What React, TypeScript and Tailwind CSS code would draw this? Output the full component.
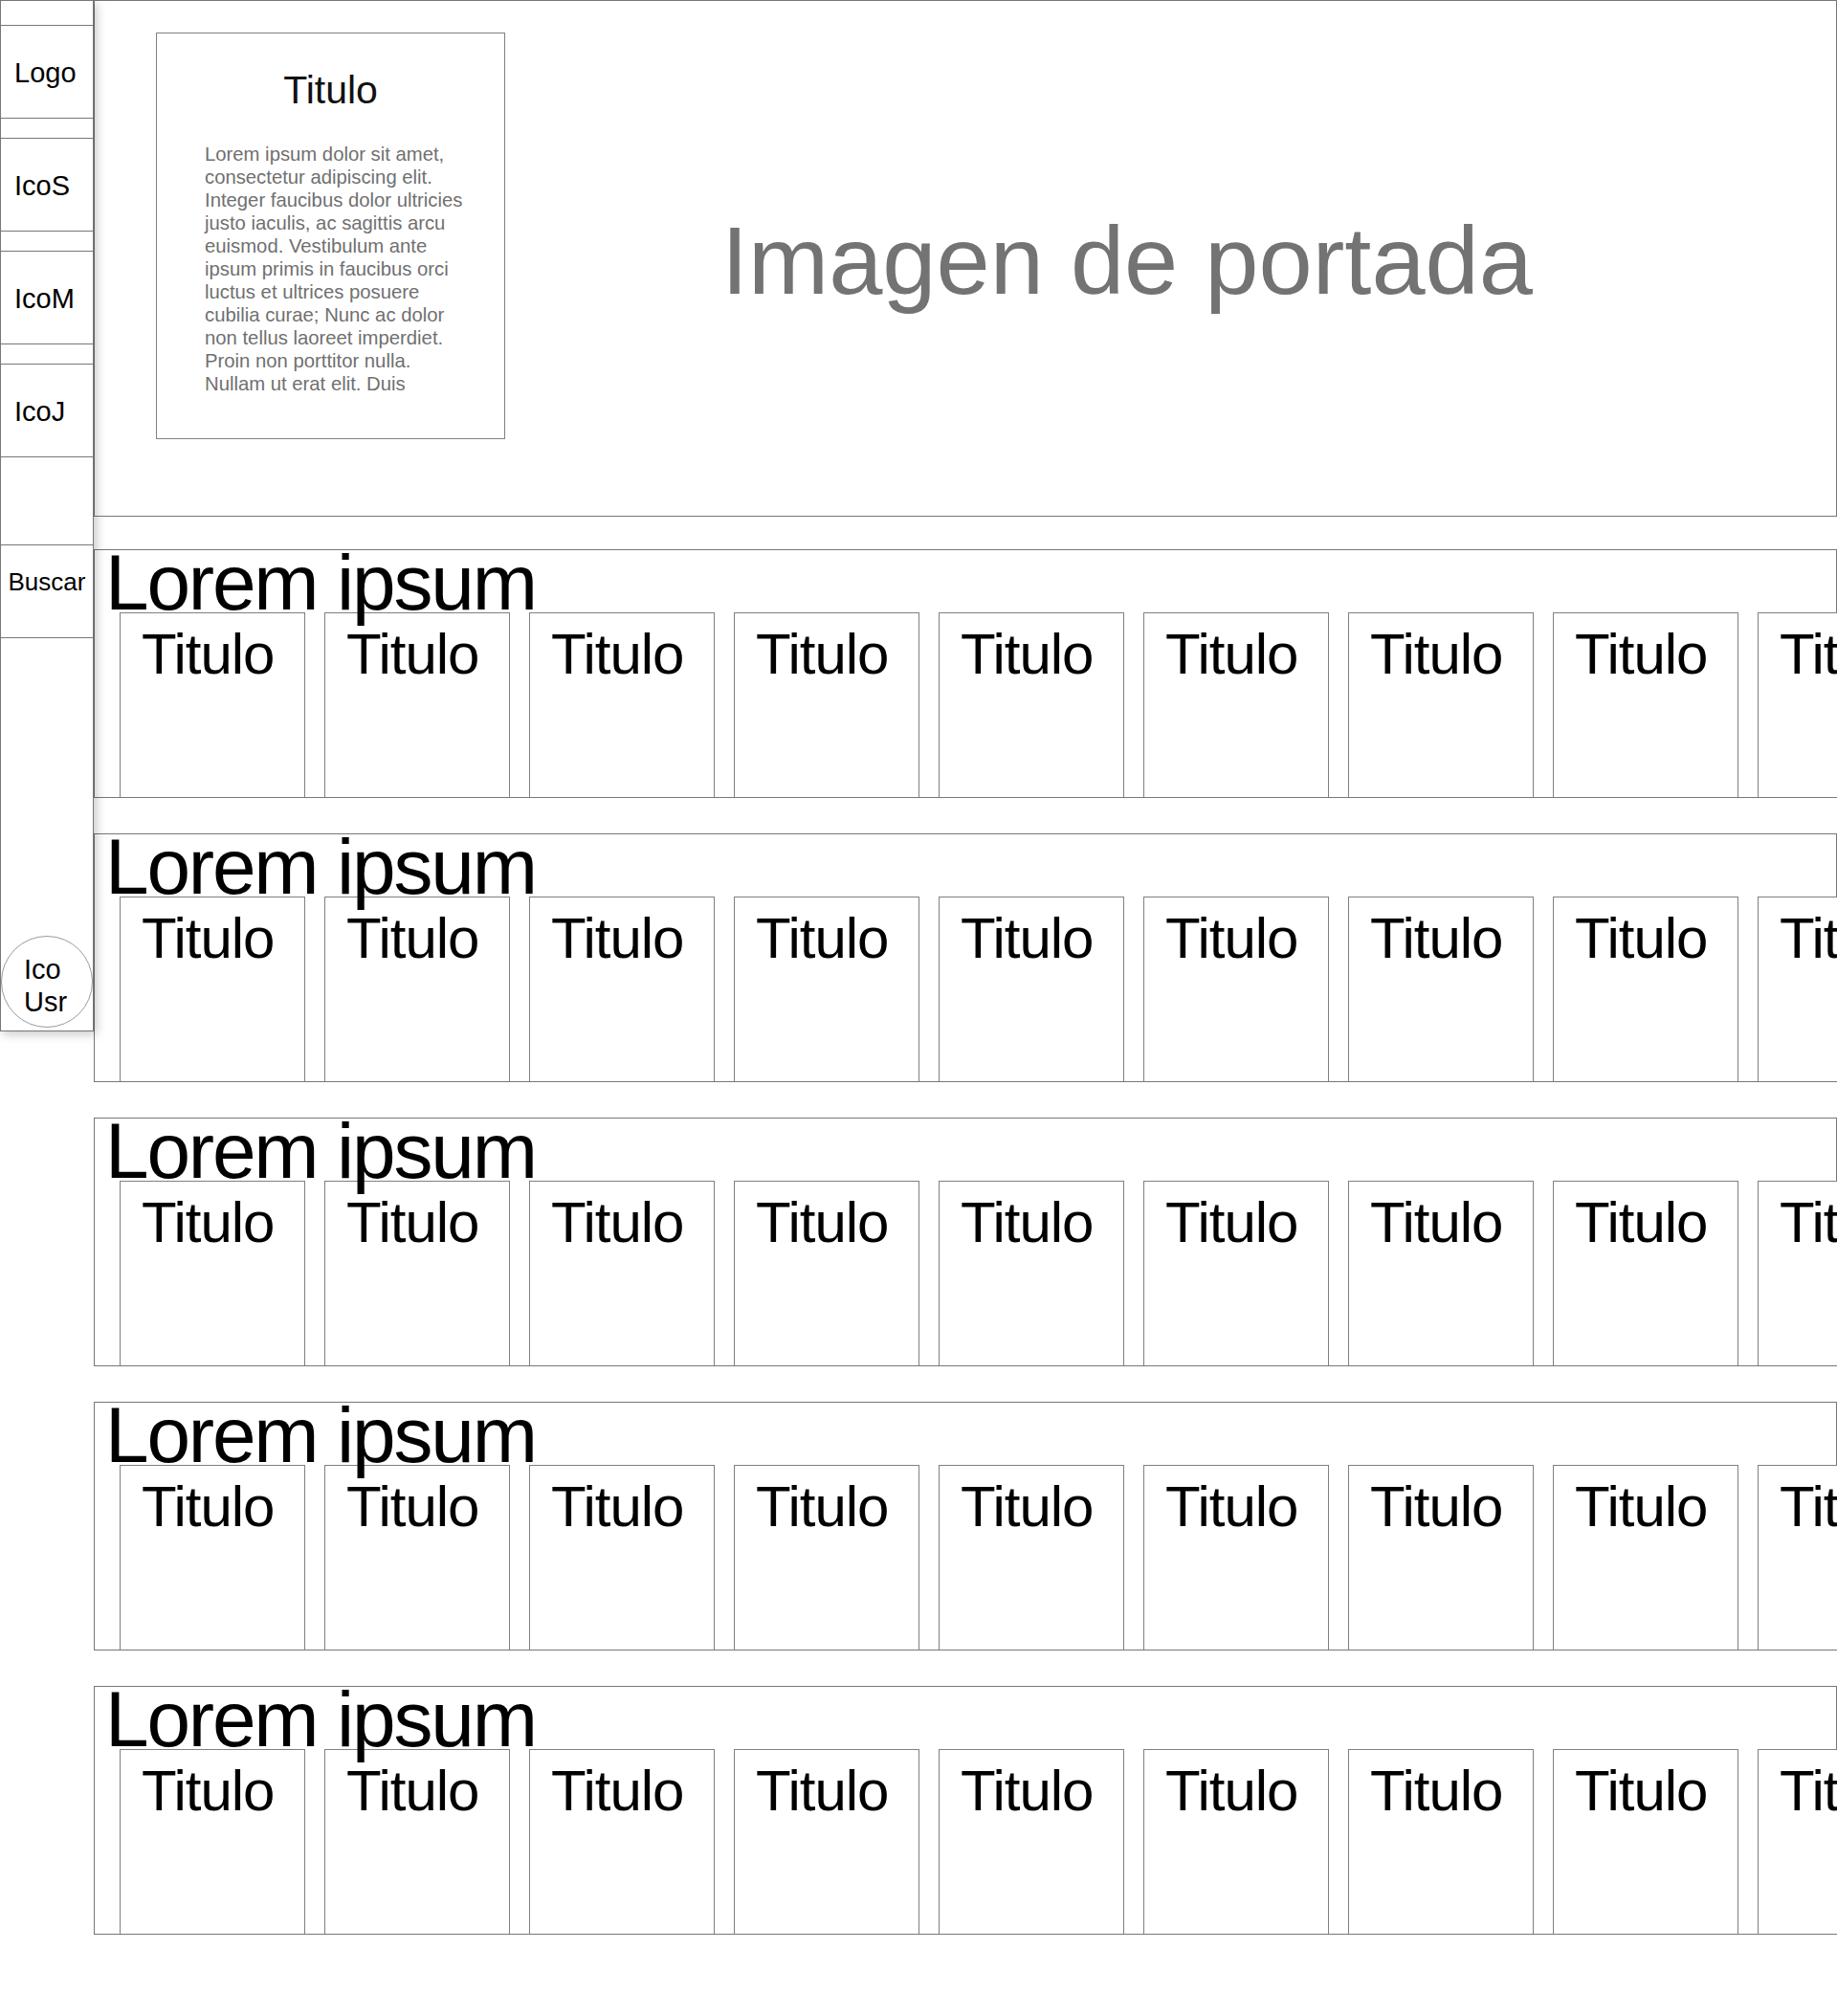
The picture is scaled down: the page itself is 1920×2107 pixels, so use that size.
export default function App() {
  const sideItems = ['Logo', 'IcoS', 'IcoM', 'IcoJ'];
  const rows = [1, 2, 3, 4, 5];
  const cards = [1, 2, 3, 4, 5, 6, 7, 8, 9, 10];

  return (
    <div className="flex w-full min-h-[2107px] overflow-hidden bg-white text-black font-['Liberation_Sans',Arial,sans-serif]">
      {/* Sidebar */}
      <aside className="relative z-20 flex flex-col w-[98px] h-[1078px] shrink-0 border border-[#777] bg-white shadow-[3px_3px_10px_rgba(0,0,0,0.22)]">
        {sideItems.map((item, i) => (
          <div
            key={item}
            className={`flex items-center h-[98px] pl-[14px] pt-[4px] border-y border-[#777] text-[29px] ${i === 0 ? 'mt-[25px]' : 'mt-5'}`}
          >
            {item}
          </div>
        ))}
        <div className="h-[98px] mt-[91px] pt-[23px] border-y border-[#777] text-center text-[26px] leading-[30px]">
          Buscar
        </div>
        <div className="mt-auto mb-[3px] w-[96px] h-[96px] rounded-full border border-[#9a9a9a] pt-[17px] pl-[23px] text-[29px] leading-[34px]">
          Ico
          <br />
          Usr
        </div>
      </aside>

      {/* Main */}
      <main className="flex flex-col flex-1 min-w-0">
        {/* Hero */}
        <section className="flex items-start h-[540px] border border-[#777]">
          <div className="w-[365px] h-[425px] ml-16 mt-[33px] shrink-0 border border-[#808080] pt-[35px]">
            <h2 className="text-center text-[41px] leading-[48px] text-[#111]">Titulo</h2>
            <p className="mt-[31px] ml-[50px] w-[272px] text-[20.3px] leading-[24px] text-[#707070]">
              Lorem ipsum dolor sit amet, consectetur adipiscing elit. Integer faucibus dolor ultricies justo iaculis, ac sagittis arcu euismod. Vestibulum ante ipsum primis in faucibus orci luctus et ultrices posuere cubilia curae; Nunc ac dolor non tellus laoreet imperdiet. Proin non porttitor nulla. Nullam ut erat elit. Duis
            </p>
          </div>
          <div className="ml-[226px] mt-[221px] whitespace-nowrap text-[101px] leading-[101px] text-[#737373]">
            Imagen de portada
          </div>
        </section>

        {/* Rows */}
        {rows.map((row, i) => (
          <section
            key={row}
            className={`flex flex-col h-[260px] border border-[#777] ${i === 0 ? 'mt-[34px]' : 'mt-[37px]'}`}
          >
            <h2 className="relative z-10 h-[65px] pl-[11px] whitespace-nowrap text-[82px] leading-[67px] tracking-[-2.2px]">
              Lorem ipsum
            </h2>
            <div className="flex flex-1 gap-5 pl-[26px]">
              {cards.map((card) => (
                <div
                  key={card}
                  className="w-[194px] h-full shrink-0 bg-white border-t border-x border-[#808080] pt-[13px] pl-[22px] text-[60px] leading-[60px] tracking-[-1px]"
                >
                  Titulo
                </div>
              ))}
            </div>
          </section>
        ))}
      </main>
    </div>
  );
}
